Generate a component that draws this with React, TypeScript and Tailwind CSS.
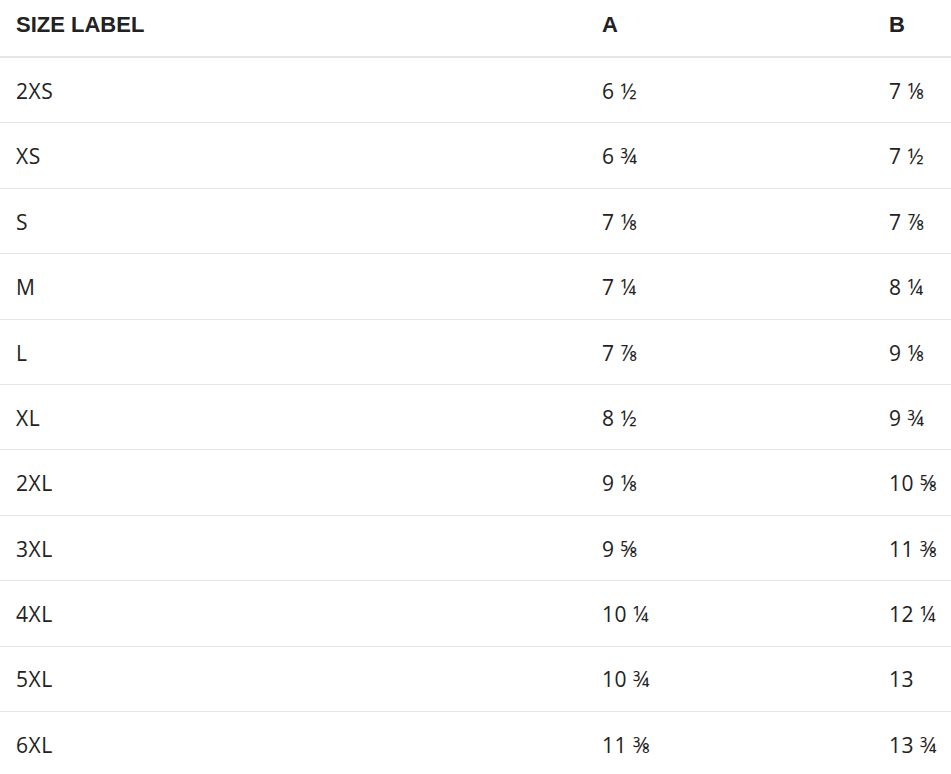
const rows: [string, string, string][] = [
  ['2XS', '6 ½', '7 ⅛'],
  ['XS', '6 ¾', '7 ½'],
  ['S', '7 ⅛', '7 ⅞'],
  ['M', '7 ¼', '8 ¼'],
  ['L', '7 ⅞', '9 ⅛'],
  ['XL', '8 ½', '9 ¾'],
  ['2XL', '9 ⅛', '10 ⅝'],
  ['3XL', '9 ⅝', '11 ⅜'],
  ['4XL', '10 ¼', '12 ¼'],
  ['5XL', '10 ¾', '13'],
  ['6XL', '11 ⅜', '13 ¾'],
];

export default function App() {
  return (
    <div className="w-[951px] h-[774px] overflow-hidden bg-white text-[#222]">
      {/* header */}
      <div className="grid grid-cols-[586px_287px_1fr] h-[58px] border-b-2 border-[#e6e6e6] font-['Liberation_Sans',Arial,sans-serif] font-bold text-[22px] uppercase">
        <div className="pl-4 pt-[8px]">Size Label</div>
        <div className="pl-4 pt-[8px]">A</div>
        <div className="pl-4 pt-[8px]">B</div>
      </div>

      {rows.map(([size, a, b]) => (
        <div
          key={size}
          className="grid grid-cols-[586px_287px_1fr] h-[65.4px] items-center pt-[3px] border-b border-[#e6e6e6] font-['Open_Sans',sans-serif] text-[21px] tracking-[0.5px]"
        >
          <div className="pl-4">{size}</div>
          <div className="pl-4">{a}</div>
          <div className="pl-4">{b}</div>
        </div>
      ))}
    </div>
  );
}
